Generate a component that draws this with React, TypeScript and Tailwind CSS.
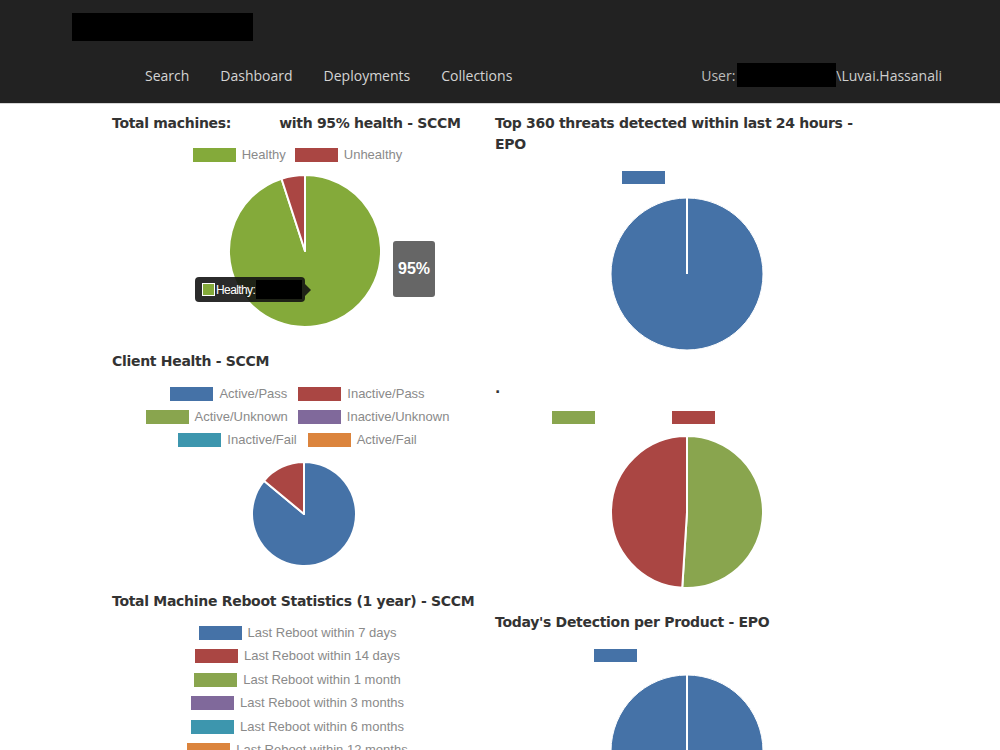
import React from 'react';

type Slice = { value: number; color: string };

const BLUE = '#4572a7';
const RED = '#aa4643';
const GREEN = '#89a54e';
const PURPLE = '#80699b';
const TEAL = '#3d96ae';
const ORANGE = '#db843d';

function point(cx: number, cy: number, r: number, f: number) {
  const a = f * Math.PI * 2;
  return [cx + r * Math.sin(a), cy - r * Math.cos(a)];
}

// simple pie, slices run clockwise from twelve o'clock
function Pie({ r, slices }: { r: number; slices: Slice[] }) {
  const size = r * 2 + 4;
  const c = size / 2;
  const total = slices.reduce((s, x) => s + x.value, 0);
  let acc = 0;

  if (slices.length === 1) {
    return (
      <svg width={size} height={size}>
        <circle cx={c} cy={c} r={r} fill={slices[0].color} stroke="#fff" strokeWidth={1} />
        <line x1={c} y1={c} x2={c} y2={c - r} stroke="#fff" strokeWidth={2} />
      </svg>
    );
  }

  return (
    <svg width={size} height={size}>
      {slices.map((s, i) => {
        const f0 = acc / total;
        acc += s.value;
        const f1 = acc / total;
        const [x0, y0] = point(c, c, r, f0);
        const [x1, y1] = point(c, c, r, f1);
        const large = f1 - f0 > 0.5 ? 1 : 0;
        return (
          <path
            key={i}
            d={`M ${c} ${c} L ${x0} ${y0} A ${r} ${r} 0 ${large} 1 ${x1} ${y1} Z`}
            fill={s.color}
            stroke="#fff"
            strokeWidth={2}
            strokeLinejoin="round"
          />
        );
      })}
    </svg>
  );
}

function LegendItem({ color, label }: { color: string; label: string }) {
  return (
    <div className="flex items-center gap-[6px]">
      <span className="block w-[43px] h-[14px]" style={{ background: color }} />
      <span className="text-[13px] leading-[14px] text-[#8a8a8a]">{label}</span>
    </div>
  );
}

const titleCls = "text-[14px] leading-[20px] font-bold tracking-[-0.3px] text-[#333] font-['DejaVu_Sans',Verdana,sans-serif] whitespace-nowrap";

export default function App() {
  const navItems = ['Search', 'Dashboard', 'Deployments', 'Collections'];

  return (
    <div className="min-h-screen bg-white font-['Liberation_Sans',Arial,sans-serif]">
      {/* Top bar */}
      <header className="h-[104px] bg-[#222222] border-b border-[#d6d6d6]">
        <div className="pt-[13px] pl-[72px]">
          <div className="w-[181px] h-[28px] bg-black" />
        </div>
        <div className="mt-[22px] h-[24px] flex items-center justify-between pl-[145px] pr-[58px] font-['Open_Sans',sans-serif] text-[14px] text-[#d4d4d4]">
          <nav className="flex items-center gap-[31px]">
            {navItems.map((item) => (
              <a key={item} className="cursor-pointer">
                {item}
              </a>
            ))}
          </nav>
          <div className="flex items-center text-[#bdbdbd]">
            <span>User:</span>
            <span className="ml-[2px] block w-[99px] h-[24px] bg-black" />
            <span className="text-[#cfcfcf]">\Luvai.Hassanali</span>
          </div>
        </div>
      </header>

      <main className="flex pl-[112px] pt-[9px]">
        {/* Left column */}
        <div className="w-[383px] flex flex-col">
          <div className={titleCls}>
            Total machines:<span className="inline-block w-[48px]" />with 95% health - SCCM
          </div>
          <div className="mt-[15px] flex justify-center gap-[9px] pr-[12px]">
            <LegendItem color="#84aa3a" label="Healthy" />
            <LegendItem color={RED} label="Unhealthy" />
          </div>
          <div className="relative mt-[11px] flex justify-center pl-[3px]">
            <Pie r={76} slices={[{ value: 95, color: '#84aa3a' }, { value: 5, color: RED }]} />
            <div className="absolute left-[281px] top-[68px] w-[42px] h-[56px] rounded-[3px] bg-[#666] flex items-center justify-center text-white font-bold text-[16px]">
              95%
            </div>
            {/* hover tooltip */}
            <div className="absolute left-[83px] top-[104px] w-[110px] h-[25px] pl-[7px] rounded-[4px] bg-[rgba(20,20,20,0.9)] flex items-center">
              <span className="block w-[13px] h-[13px] bg-[#84aa3a] border border-white" />
              <span className="ml-[1px] text-white text-[12px] tracking-[-0.6px]">Healthy:</span>
              <span className="ml-[1px] block w-[46px] h-[19px] bg-black" />
              <span className="absolute right-[-6px] top-[7px] w-0 h-0 border-y-[6px] border-y-transparent border-l-[6px] border-l-[rgba(20,20,20,0.9)]" />
            </div>
          </div>

          <div className={`${titleCls} mt-[22px]`}>Client Health - SCCM</div>
          <div className="mt-[16px] flex flex-col items-center gap-[9px] pr-[12px]">
            <div className="flex gap-[11px]">
              <LegendItem color={BLUE} label="Active/Pass" />
              <LegendItem color={RED} label="Inactive/Pass" />
            </div>
            <div className="flex gap-[10px]">
              <LegendItem color={GREEN} label="Active/Unknown" />
              <LegendItem color={PURPLE} label="Inactive/Unknown" />
            </div>
            <div className="flex gap-[11px]">
              <LegendItem color={TEAL} label="Inactive/Fail" />
              <LegendItem color={ORANGE} label="Active/Fail" />
            </div>
          </div>
          <div className="mt-[13px] flex justify-center">
            <Pie r={52} slices={[{ value: 86, color: BLUE }, { value: 14, color: RED }]} />
          </div>

          <div className={`${titleCls} mt-[23px]`}>Total Machine Reboot Statistics (1 year) - SCCM</div>
          <div className="mt-[15px] flex flex-col items-center gap-[9.4px] pr-[12px]">
            <LegendItem color={BLUE} label="Last Reboot within 7 days" />
            <LegendItem color={RED} label="Last Reboot within 14 days" />
            <LegendItem color={GREEN} label="Last Reboot within 1 month" />
            <LegendItem color={PURPLE} label="Last Reboot within 3 months" />
            <LegendItem color={TEAL} label="Last Reboot within 6 months" />
            <LegendItem color={ORANGE} label="Last Reboot within 12 months" />
          </div>
        </div>

        {/* Right column */}
        <div className="w-[383px] flex flex-col">
          <div className={`${titleCls} leading-[21px]`}>
            Top 360 threats detected within last 24 hours -
            <br />
            EPO
          </div>
          <div className="mt-[16px] pl-[127px]">
            <span className="block w-[43px] h-[13px]" style={{ background: BLUE }} />
          </div>
          <div className="mt-[12px] flex justify-center">
            <Pie r={76} slices={[{ value: 1, color: BLUE }]} />
          </div>

          <div className={`${titleCls} mt-[26px] text-[6px]`}>.</div>
          <div className="mt-[13px] pl-[57px] flex gap-[77px]">
            <span className="block w-[43px] h-[13px]" style={{ background: GREEN }} />
            <span className="block w-[43px] h-[13px]" style={{ background: RED }} />
          </div>
          <div className="mt-[10px] flex justify-center">
            <Pie r={76} slices={[{ value: 51, color: GREEN }, { value: 49, color: RED }]} />
          </div>

          <div className={`${titleCls} mt-[22px]`}>Today's Detection per Product - EPO</div>
          <div className="mt-[17px] pl-[99px]">
            <span className="block w-[43px] h-[13px]" style={{ background: BLUE }} />
          </div>
          <div className="mt-[11px] flex justify-center">
            <Pie r={76} slices={[{ value: 1, color: BLUE }]} />
          </div>
        </div>
      </main>
    </div>
  );
}
